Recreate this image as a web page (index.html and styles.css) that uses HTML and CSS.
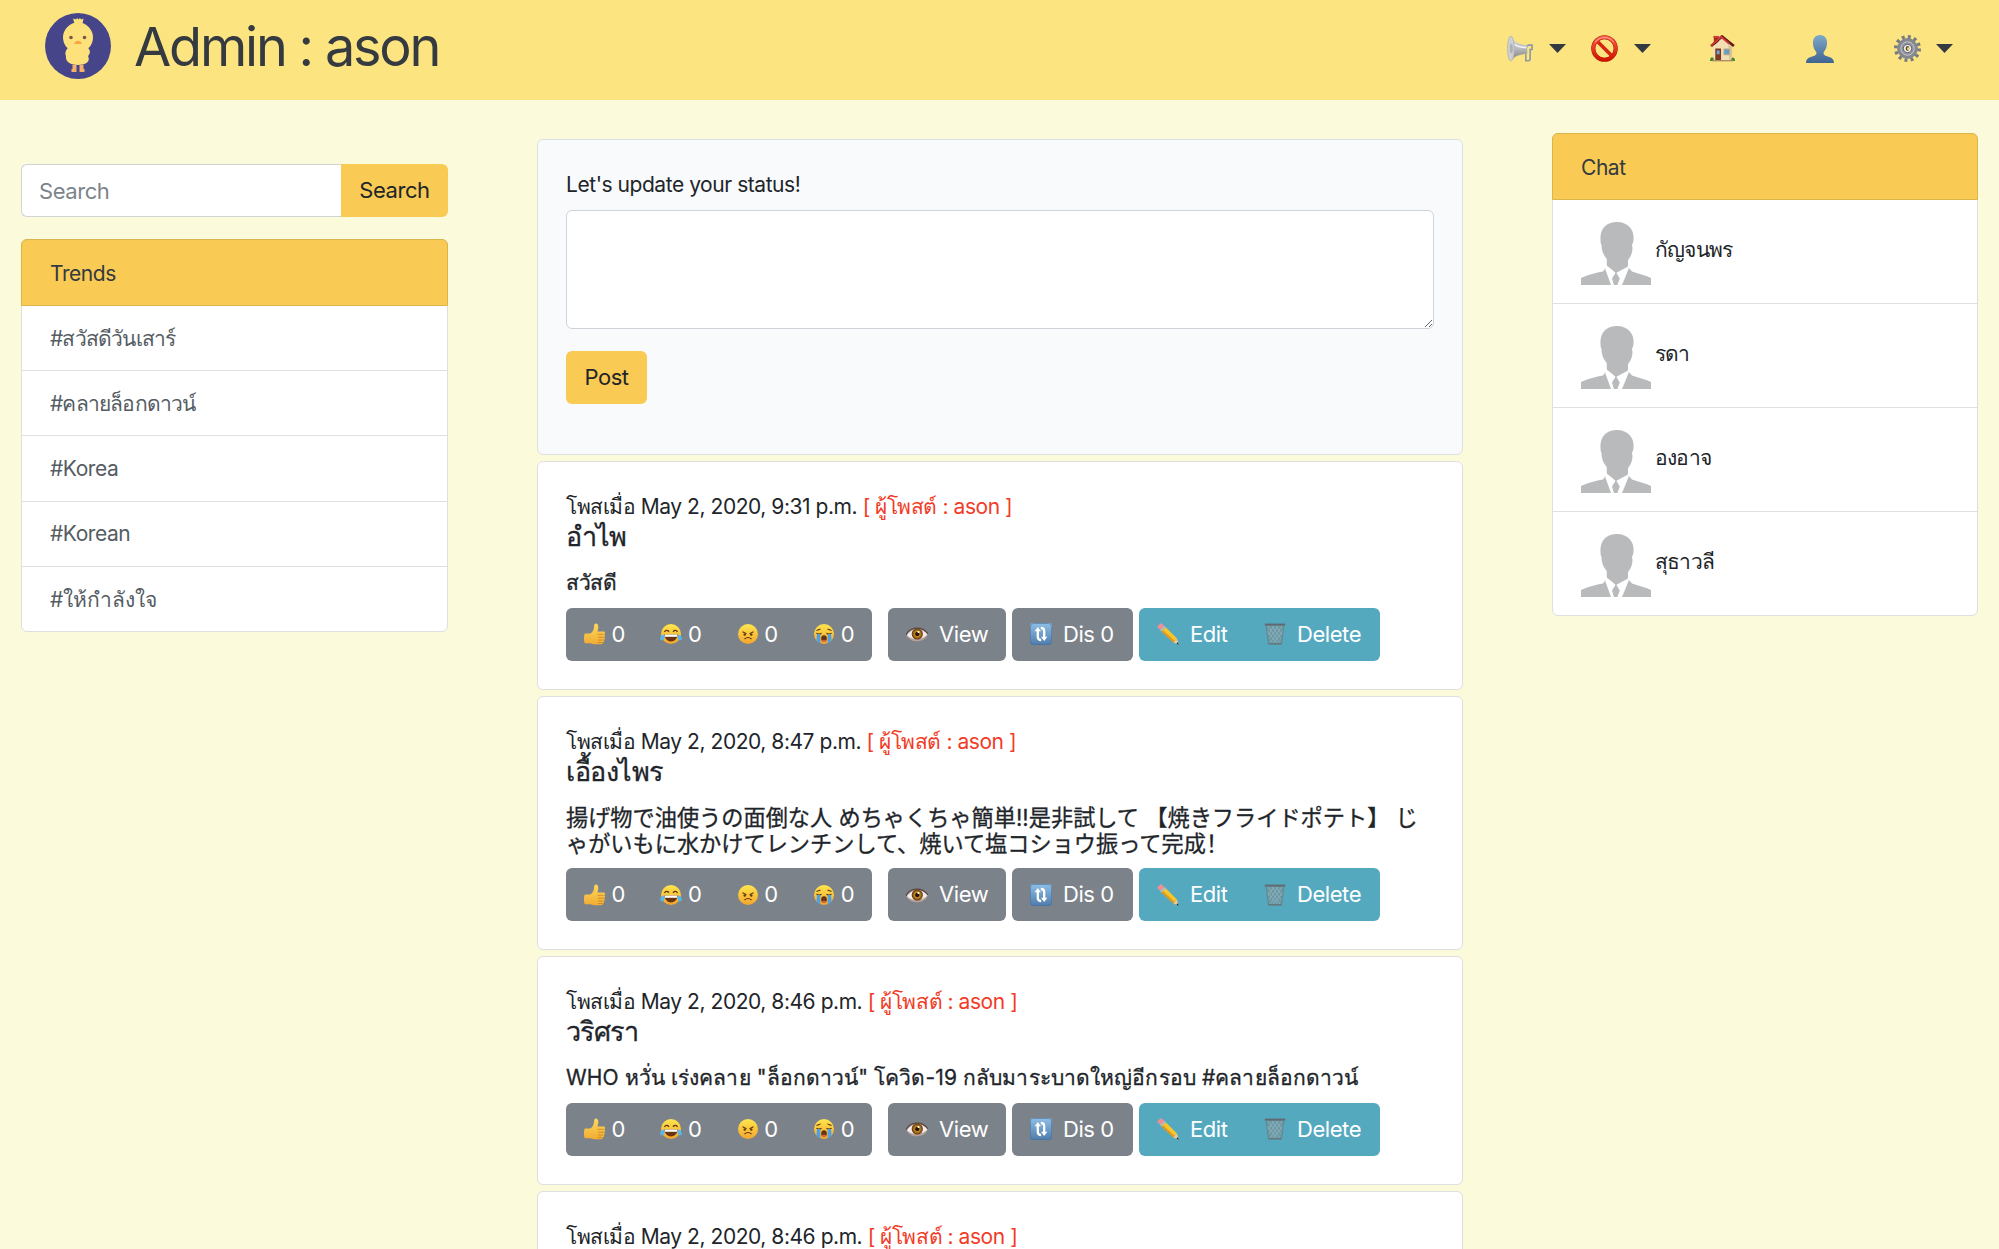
FILE: index.html
```
<!DOCTYPE html>
<html lang="th">
<head>
<meta charset="utf-8">
<title>Admin : ason</title>
<link rel="stylesheet" href="styles.css">
</head>
<body>
<svg class="sprite" aria-hidden="true">
  <defs>
    <linearGradient id="g-silver" x1="0" y1="0" x2="0" y2="1"><stop offset="0" stop-color="#e2e2e4"/><stop offset=".5" stop-color="#b9babd"/><stop offset="1" stop-color="#77797e"/></linearGradient>
    <linearGradient id="g-user" x1="0" y1="0" x2="0" y2="1"><stop offset="0" stop-color="#7fa9c9"/><stop offset="1" stop-color="#3f6492"/></linearGradient>
    <linearGradient id="g-face" x1="0" y1="0" x2="0" y2="1"><stop offset="0" stop-color="#ffe64d"/><stop offset="1" stop-color="#f3a52c"/></linearGradient>
    <linearGradient id="g-hand" x1="0" y1="0" x2="0" y2="1"><stop offset="0" stop-color="#ffd95c"/><stop offset="1" stop-color="#f0ac33"/></linearGradient>
    <linearGradient id="g-blue" x1="0" y1="0" x2="0" y2="1"><stop offset="0" stop-color="#8fbfe6"/><stop offset="1" stop-color="#4f7bab"/></linearGradient>
    <linearGradient id="g-red" x1="0" y1="0" x2="0" y2="1"><stop offset="0" stop-color="#ff5a45"/><stop offset="1" stop-color="#cf1500"/></linearGradient>
    <radialGradient id="g-iris"><stop offset=".3" stop-color="#24140a"/><stop offset=".45" stop-color="#c98c1c"/><stop offset="1" stop-color="#5a3210"/></radialGradient>
  </defs>
  <symbol id="horn" viewBox="0 0 28 28">
    <path d="M20 12.500l2-2h4v4.500h-2V25c0 1.200-.8 1.700-2 1.700h-2.500V20" fill="none" stroke="#8d9aa5" stroke-width="1.700"/>
    <path d="M4 1c4 7 9 9 17 9.500v9C13 20 7 22 4 27z" fill="url(#g-silver)"/>
    <ellipse cx="4" cy="14" rx="3.500" ry="13" fill="#cfd0d2" stroke="#b0b1b4" stroke-width=".8"/>
    <ellipse cx="4.500" cy="14" rx="1.500" ry="5" fill="#aeafb2"/>
    <path d="M8 10c4 2.500 8 3 12 3" stroke="#f4f4f5" stroke-width="1.500" fill="none"/>
  </symbol>
  <symbol id="ban" viewBox="0 0 26 26">
    <circle cx="13" cy="13" r="10.800" fill="none" stroke="#b51402" stroke-width="4"/>
    <path d="M5.500 5.500l15 15" stroke="#d92410" stroke-width="3.400"/>
    <circle cx="13" cy="13" r="10.800" fill="none" stroke="url(#g-red)" stroke-width="3"/>
    <path d="M4 7a11 11 0 0 1 18 0" fill="none" stroke="#ff9c8c" stroke-width="1"/>
  </symbol>
  <symbol id="house" viewBox="0 0 26 28">
    <path d="M4 1h5v9H4z" fill="#a32b25"/><path d="M3.500 1h6v1.800h-6z" fill="#d0443b"/>
    <path d="M3 12L13 3l10 9v14H3z" fill="#f3dfb4"/><path d="M19 9l4 3v14h-3z" fill="#dfc593"/>
    <path d="M1.200 11.500L12.500 1.500 24.800 11.500" fill="none" stroke="#5b1714" stroke-width="2.600"/>
    <path d="M1.200 11L11.500 1.800 20 9" fill="none" stroke="#d23b35" stroke-width="2"/>
    <path d="M5.500 14h6v12h-6z" fill="#7c3a22"/><path d="M7 16h3v4H7z" fill="#68a8d6"/>
    <path d="M14.500 14.500h6v6h-6z" fill="#5f9fd0" stroke="#c7a878"/>
    <path d="M0 27c0-5 4-5 4-1v1zM22 27c0-5 4-5 4 0z" fill="#3f8a2c"/><path d="M2 26h22v1.300H2z" fill="#a6875d"/>
  </symbol>
  <symbol id="user" viewBox="0 0 28 28">
    <path d="M14 0c5 0 7.500 4 7 9-.3 4-1.800 6-3.200 8-.8 2 .2 3 1.700 3.700 4 1.300 8.500 1.800 8.500 7.300H0c0-5.500 4.500-6 8.500-7.300C10 20 11 19 10.200 17 8.800 15 7.300 13 7 9c-.5-5 2-9 7-9z" fill="url(#g-user)"/>
  </symbol>
  <symbol id="gear" viewBox="0 0 28 28">
    <circle cx="14" cy="14" r="12" fill="none" stroke="#777a80" stroke-width="4" stroke-dasharray="3 3.283"/>
    <circle cx="14" cy="14" r="8.800" fill="#a9abb0" stroke="#85888f" stroke-width="4"/>
    <circle cx="14" cy="14" r="7" fill="#91949c" stroke="#c6c8cc"/>
    <circle cx="14" cy="14" r="4.300" fill="#f0f0f1" stroke="#5a5d64"/>
    <ellipse cx="14" cy="14" rx="1.900" ry="2.500" fill="#5f4a22"/><ellipse cx="14.600" cy="14.300" rx="1" ry="1.500" fill="#fce480"/>
  </symbol>
  <symbol id="caret" viewBox="0 0 17 9"><path d="M0 0h17L8.500 9z" fill="#343a40"/></symbol>
  <symbol id="thumb" viewBox="0 0 22 22">
    <path d="M0.800 10.500h5.200c3-1.500 4-4 4.200-8.500C10.500-.5 14.500-.3 14.300 4c0 2-.5 3-.8 4.500H19.500c2 0 2 2.300.7 2.800 1.300.8 1 2.500 0 2.800 1 .9.700 2.500-.5 2.800 1 1 .3 2.200-1 2.400.3 1.200-.7 2-2 2h-5C9 21.600 8 20.300 6 20.300H.8c-1.200-3-1.200-7 0-9.800z" fill="url(#g-hand)"/>
    <path d="M13.500 11.300h6M14 14.200h6M14 17h5.300M14 19.500h4" stroke="#c78420" stroke-width=".8"/>
  </symbol>
  <symbol id="joy" viewBox="0 0 22 22">
    <circle cx="11" cy="11" r="10" fill="url(#g-face)"/>
    <path d="M4.500 9c1-2 3-2 4.500-.3M13 8.700c1.500-1.700 3.500-1.700 4.500.3" fill="none" stroke="#5c3410" stroke-width="1.300"/>
    <path d="M4.500 11.500h13c0 4-3 7-6.500 7s-6.500-3-6.500-7z" fill="#6a3313"/><path d="M5 11.500h12v2.300H5z" fill="#fff"/>
    <path d="M4.500 11.500C1 12 0 14 .2 16s3.500 2 4.100-.500zM17.500 11.500c3.500.5 4.500 2.500 4.300 4.500s-3.500 2-4.100-.500z" fill="#58b5ee"/>
  </symbol>
  <symbol id="angry" viewBox="0 0 22 22">
    <circle cx="11" cy="11" r="10" fill="url(#g-face)"/>
    <path d="M5.500 8.800l4 2M16.500 8.800l-4 2M7.500 16c2-1.700 5-1.700 7 0" fill="none" stroke="#5c3410" stroke-width="1.100"/>
    <circle cx="7.700" cy="11.600" r="1.200" fill="#5c3410"/><circle cx="14.300" cy="11.600" r="1.200" fill="#5c3410"/>
  </symbol>
  <symbol id="cry" viewBox="0 0 22 22">
    <circle cx="11" cy="11" r="10" fill="url(#g-face)"/>
    <path d="M3.500 7.500l4-1.500M18.500 7.500l-4-1.500M3.500 10.300c1.500 1 3.500 1 5 0M13.500 10.300c1.500 1 3.500 1 5 0" fill="none" stroke="#5c3410" stroke-width="1.100"/>
    <path d="M4 11h3.300v9.500C5.500 19.800 4 18.500 3.500 17zM14.700 11H18l.5 6c-.8 1.500-2 2.800-3.800 3.500z" fill="#4d9fe6"/>
    <ellipse cx="11" cy="15.500" rx="2.800" ry="3.300" fill="#6a3313"/><path d="M9 17.500c1-1 3-1 4 0-1 1.800-3 1.800-4 0z" fill="#e8694d"/>
  </symbol>
  <symbol id="eye" viewBox="0 0 22 22">
    <path d="M0 12c4-7.500 16-9.500 22-1-3 9-17 10-22 1z" fill="#b9a09a"/>
    <path d="M1 12c4-6.500 15-8.500 20.300-1C18 17 5 18 1 12z" fill="#f1ecee"/>
    <path d="M0 12C4 3.500 16 2.500 22 11" fill="none" stroke="#5b4640" stroke-width="1.200"/>
    <circle cx="11.300" cy="11" r="5.600" fill="url(#g-iris)"/><circle cx="12.500" cy="9" r="1.100" fill="#fff"/>
  </symbol>
  <symbol id="cycle" viewBox="0 0 22 22">
    <rect width="22" height="22" rx="3" fill="url(#g-blue)"/><rect x=".5" y=".5" width="21" height="21" rx="3" fill="none" stroke="#46719c" stroke-opacity=".6"/>
    <path d="M7.800 7v7c0 2 1 3 3.400 3M14.200 15V8c0-2-1-3-3.400-3" fill="none" stroke="#fff" stroke-width="2.300"/>
    <path d="M4.600 8.200L7.800 4l3.200 4.200zM11 13.800l3.200 4.200 3.200-4.200z" fill="#fff"/>
  </symbol>
  <symbol id="pencil" viewBox="0 0 22 22">
    <path d="M0 3.500L4 0l3.500 3L3 7z" fill="#ee8f92"/><path d="M3 7l4.500-4L9 4.500 4.500 8.500z" fill="#b9bcc0"/>
    <path d="M4.500 8.500L9 4.500l11 11-3.500 4z" fill="#f8c52c"/><path d="M4.500 8.500L6 7.200l12 11-1.500 1.300z" fill="#dc981b"/>
    <path d="M16.500 19.500l3.500-4 1.500 6z" fill="#eccb98"/><path d="M19.500 20.800l1.300-1.600.9 2.600z" fill="#222"/>
  </symbol>
  <symbol id="trash" viewBox="0 0 22 22">
    <path d="M2 2h18l-2.500 19h-13z" fill="#6f949f" fill-opacity=".75"/>
    <path d="M4 3l12 17M8 3l9 13M12 3l6 9M3 8l10 12M18 3L6 20M14 3L5 16M10 3L4 12M19 8L9 20" stroke="#9fb7bd" stroke-width=".6"/>
    <path d="M.8 1.600h20.400" stroke="#606a70" stroke-width="2"/><path d="M4.300 20.800h13.400" stroke="#66777e" stroke-width="1.600"/>
    <path d="M2 2.500L4.500 21M20 2.500L17.500 21" stroke="#6a7c84" stroke-width=".8"/>
  </symbol>
  <symbol id="avatar" viewBox="0 0 70 63">
    <path d="M36 0c11 0 17.500 8 16.500 17 0 3-.5 4-1.500 5.500 1.500 7-1 11.500-4 15.500v6.500L35 51 25.800 43.500V37C22.500 33 20.500 29 20.500 23c-1-2-1-3-1-6C19 7 25 0 36 0z" fill="#b9babb"/>
    <path d="M0 56c7-3 15-5.500 22-6.500l2-3L30 63H0zM70 56c-6-3-13-4.500-19-6.500L48 46l-7 17h29z" fill="#b9babb"/>
    <path d="M35 50l3.700 6.500L36.500 63h-3.500L31 56.500z" fill="#b9babb"/>
  </symbol>
  <symbol id="chick" viewBox="0 0 66 66">
    <circle cx="33" cy="33" r="33" fill="#47458a"/>
    <path d="M28 5.500l3 1 1-1.500 1.500 1.500L35 5l1 1.500 2.500-1-1 5h-8z" fill="#fde27c"/>
    <circle cx="33" cy="24.500" r="15" fill="#fde27c"/>
    <path d="M23 35h20c3 3 2 6 0 8 3 6-3 9-10 9s-13-3-12-9c-1-2-1-5 2-8z" fill="#fde27c"/>
    <circle cx="26" cy="24.500" r="1.800" fill="#7c5548"/><circle cx="39.500" cy="24.500" r="1.800" fill="#7c5548"/>
    <path d="M29 31c1-4.500 7-4.500 8 0z" fill="#f9a646"/>
    <path d="M27.500 52h4v7h-5v-3h1zM34.500 52h4v4h1v3h-5z" fill="#f7b06a"/>
  </symbol>
</svg>

<header class="topbar">
  <svg class="logo"><use href="#chick"/></svg>
  <h1 class="brand">Admin : ason</h1>
  <nav class="menu">
    <a class="drop"><svg class="emoji"><use href="#horn"/></svg><svg class="caret"><use href="#caret"/></svg></a>
    <a class="drop"><svg class="emoji"><use href="#ban"/></svg><svg class="caret"><use href="#caret"/></svg></a>
    <a class="link home"><svg class="emoji"><use href="#house"/></svg></a>
    <a class="link me"><svg class="emoji person"><use href="#user"/></svg></a>
    <a class="drop settings"><svg class="emoji"><use href="#gear"/></svg><svg class="caret"><use href="#caret"/></svg></a>
  </nav>
</header>

<main class="page">
  <aside class="side left">
    <form class="search">
      <input class="field" type="text" placeholder="Search">
      <button class="btn yellow" type="button">Search</button>
    </form>
    <ul class="list trends">
      <li class="head">Trends</li>
      <li class="thai">#สวัสดีวันเสาร์</li>
      <li class="thai">#คลายล็อกดาวน์</li>
      <li>#Korea</li>
      <li>#Korean</li>
      <li class="wide">#ให้กำลังใจ</li>
    </ul>
  </aside>

  <section class="feed">
    <form class="card compose">
      <label class="label" for="status">Let's update your status!</label>
      <textarea class="status" id="status"></textarea>
      <button class="btn yellow post" type="button">Post</button>
    </form>

    <article class="card">
      <div class="meta">โพสเมื่อ May 2, 2020, 9:31 p.m. <span class="by">[ ผู้โพสต์ : ason ]</span></div>
      <h5 class="title">อำไพ</h5>
      <h6 class="text">สวัสดี</h6>
      <div class="actions">
        <div class="group gray"><a class="react"><svg><use href="#thumb"/></svg>0</a><a class="react"><svg><use href="#joy"/></svg>0</a><a class="react"><svg><use href="#angry"/></svg>0</a><a class="react"><svg><use href="#cry"/></svg>0</a></div>
        <a class="btn gray view"><svg><use href="#eye"/></svg>View</a>
        <a class="btn gray dis"><svg><use href="#cycle"/></svg>Dis 0</a>
        <div class="group teal"><a class="btn edit"><svg><use href="#pencil"/></svg>Edit</a><a class="btn delete"><svg><use href="#trash"/></svg>Delete</a></div>
      </div>
    </article>

    <article class="card">
      <div class="meta">โพสเมื่อ May 2, 2020, 8:47 p.m. <span class="by">[ ผู้โพสต์ : ason ]</span></div>
      <h5 class="title roomy">เอื้องไพร</h5>
      <h6 class="text ja" lang="ja">揚げ物で油使うの面倒な人 めちゃくちゃ簡単!!是非試して 【焼きフライドポテト】 じ<br>ゃがいもに水かけてレンチンして、焼いて塩コショウ振って完成<span class="mark" lang="zh-Hans">！</span></h6>
      <div class="actions">
        <div class="group gray"><a class="react"><svg><use href="#thumb"/></svg>0</a><a class="react"><svg><use href="#joy"/></svg>0</a><a class="react"><svg><use href="#angry"/></svg>0</a><a class="react"><svg><use href="#cry"/></svg>0</a></div>
        <a class="btn gray view"><svg><use href="#eye"/></svg>View</a>
        <a class="btn gray dis"><svg><use href="#cycle"/></svg>Dis 0</a>
        <div class="group teal"><a class="btn edit"><svg><use href="#pencil"/></svg>Edit</a><a class="btn delete"><svg><use href="#trash"/></svg>Delete</a></div>
      </div>
    </article>

    <article class="card">
      <div class="meta">โพสเมื่อ May 2, 2020, 8:46 p.m. <span class="by">[ ผู้โพสต์ : ason ]</span></div>
      <h5 class="title">วริศรา</h5>
      <h6 class="text long">WHO หวั่น เร่งคลาย "ล็อกดาวน์" โควิด-19 กลับมาระบาดใหญ่อีกรอบ #คลายล็อกดาวน์</h6>
      <div class="actions">
        <div class="group gray"><a class="react"><svg><use href="#thumb"/></svg>0</a><a class="react"><svg><use href="#joy"/></svg>0</a><a class="react"><svg><use href="#angry"/></svg>0</a><a class="react"><svg><use href="#cry"/></svg>0</a></div>
        <a class="btn gray view"><svg><use href="#eye"/></svg>View</a>
        <a class="btn gray dis"><svg><use href="#cycle"/></svg>Dis 0</a>
        <div class="group teal"><a class="btn edit"><svg><use href="#pencil"/></svg>Edit</a><a class="btn delete"><svg><use href="#trash"/></svg>Delete</a></div>
      </div>
    </article>

    <article class="card last">
      <div class="meta">โพสเมื่อ May 2, 2020, 8:46 p.m. <span class="by">[ ผู้โพสต์ : ason ]</span></div>
    </article>
  </section>

  <aside class="side right">
    <ul class="list chat">
      <li class="head">Chat</li>
      <li><svg class="avatar"><use href="#avatar"/></svg><span class="name">กัญจนพร</span></li>
      <li><svg class="avatar"><use href="#avatar"/></svg><span class="name">รดา</span></li>
      <li><svg class="avatar"><use href="#avatar"/></svg><span class="name">องอาจ</span></li>
      <li><svg class="avatar"><use href="#avatar"/></svg><span class="name">สุธาวลี</span></li>
    </ul>
  </aside>
</main>
</body>
</html>
```
FILE: styles.css
```
* { box-sizing: border-box; }
body {
  margin: 0;
  background: #fbfada;
  color: #212529;
  font: 21px/33px Inter, "Liberation Sans", "Noto Sans CJK JP", sans-serif;
  letter-spacing: -0.45px;
}
ul { list-style: none; margin: 0; padding: 0; }
h1, h5, h6 { margin: 0; font-weight: 400; }
button, input { font: inherit; letter-spacing: inherit; }
.sprite { position: absolute; width: 0; height: 0; }

/* top bar */
.topbar { display: flex; height: 100px; background: #fce480; padding: 0 46px 0 45px; }
.logo { width: 66px; height: 66px; margin-top: 13px; }
.brand { margin-left: 23px; font-size: 54px; line-height: 93px; letter-spacing: -2.2px; color: #343a40; }
.menu { display: flex; align-items: center; margin-left: auto; height: 97px; }
.drop { display: flex; align-items: center; gap: 15.500px; margin-left: 25px; }
.link { display: flex; }
.emoji { width: 27px; height: 27px; }
.person { width: 28px; height: 28px; }
.caret { width: 17px; height: 9px; }
.home { margin-left: 58px; }
.me { margin-left: 70px; }
.settings { margin-left: 60px; }

/* columns */
.page { display: flex; justify-content: space-between; height: 1149px; padding: 0 21px; overflow: hidden; }
.left { width: 427px; padding-top: 64px; }
.right { width: 426px; padding-top: 33px; }
.feed { display: flex; flex-direction: column; gap: 6px; width: 926px; padding-top: 39px; }

.btn {
  display: flex; align-items: center; height: 53px; padding: 0 18px;
  border: 0; border-radius: 6px; color: #fff; font-size: 22px;
}
.yellow { background: #f9ca54; color: #212529; justify-content: center; padding: 0; }
.search { display: flex; }
.field {
  flex: 1; min-width: 0; height: 53px; padding: 0 17px;
  border: 1px solid #ced4da; border-right: 0; border-radius: 6px 0 0 6px;
  background: #fff; font-size: 22px;
}
.field::placeholder { color: #7c848b; }
.search .btn { width: 107px; border-radius: 0 6px 6px 0; }

.list { border: 1px solid #dfdfdf; border-radius: 6px; background: #fff; }
.list li { display: flex; align-items: center; border-top: 1px solid #dfdfdf; padding: 0 28px; }
.list .head { height: 67px; margin: -1px -1px 0; padding: 1px 28px 0; border: 1px solid #dcb44c; border-radius: 6px 6px 0 0; background: #f9ca54; color: #343a40; }
.list .head + li { border-top: 0; height: 64px; }
.trends { margin-top: 22px; color: #555c63; }
.trends li { height: 65.300px; }
.trends .thai { letter-spacing: -0.8px; }
.trends .wide { letter-spacing: -0.1px; }
.chat li { height: 104px; padding-top: 3px; }
.chat .head + li { height: 103px; }
.avatar { width: 70px; height: 63px; margin-right: 4px; }
.name { letter-spacing: -0.8px; padding-bottom: 8px; }

/* feed */
.card { flex: none; padding: 28px; border: 1px solid #dfdfdf; border-radius: 6px; background: #fff; }
.compose { height: 316px; background: #f9fafc; border-color: #dcdfe3; }
.label { display: block; height: 42px; line-height: 33px; }
.status { display: block; width: 100%; height: 119px; border: 1px solid #ced4da; border-radius: 6px; background: #fff; }
.post { width: 81px; margin-top: 22px; }
.meta { line-height: 33px; white-space: nowrap; }
.by { color: #f23b26; }
.title { margin-top: -3px; font-size: 27px; line-height: 33px; letter-spacing: -1px; -webkit-text-stroke: .3px; }
.roomy { letter-spacing: -0.5px; }
.text { margin: 17px 0 11px; font-size: 21px; line-height: 26.500px; white-space: nowrap; -webkit-text-stroke: .3px; }
.ja { font-size: 22.200px; line-height: 26.300px; letter-spacing: 0; }
.mark { font-family: "Noto Sans CJK SC", sans-serif; line-height: 0; }
.long { letter-spacing: .1px; }
.last { height: 235px; }

.actions { display: flex; }
.actions svg { width: 22px; height: 22px; flex: none; }
.group { display: flex; border-radius: 6px; }
.gray { background: #7b8289; }
.teal { background: #54a9bf; margin-left: 6px; }
.react { display: flex; align-items: center; gap: 5.500px; width: 76.400px; height: 53px; padding-left: 18px; color: #fff; font-size: 22px; }
.view { width: 118px; margin-left: 16.500px; gap: 11px; }
.dis { width: 121px; margin-left: 6px; gap: 11px; }
.edit { width: 107px; gap: 11px; padding-right: 0; }
.delete { width: 134px; gap: 11px; padding-right: 0; }
```
